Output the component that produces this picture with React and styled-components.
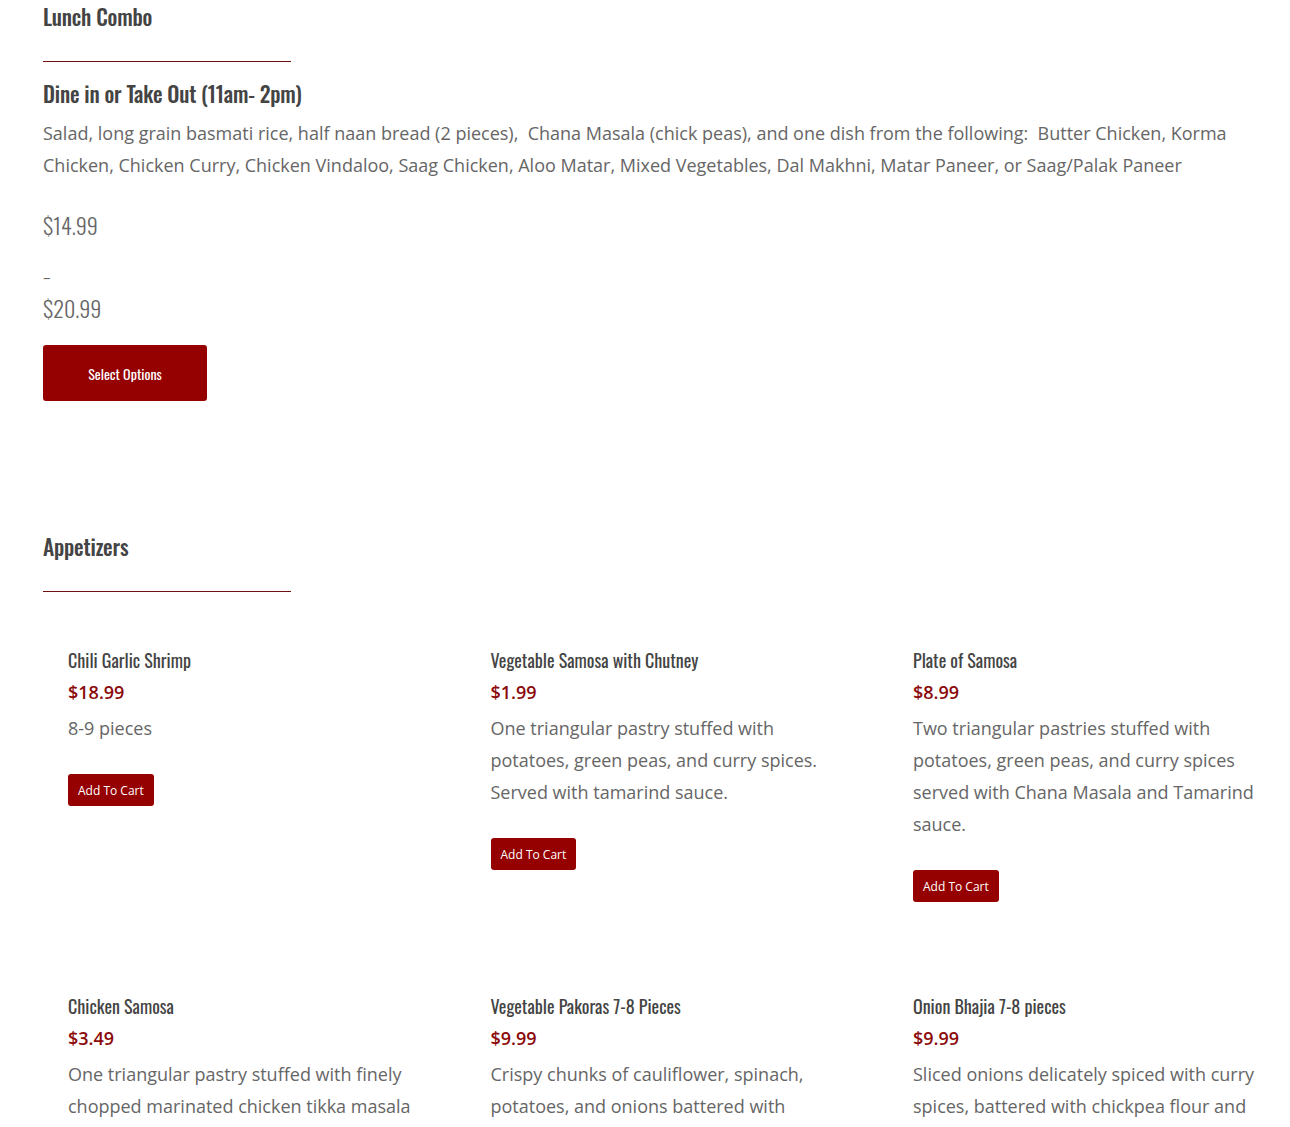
import React from 'react';
import styled, { createGlobalStyle } from 'styled-components';

const Global = createGlobalStyle`
  body {
    margin: 0;
    background: #fff;
    font-family: 'Open Sans', sans-serif;
    color: #666;
  }
`;

const HEAD = `'Oswald', 'Liberation Sans Narrow', 'DejaVu Sans Condensed', sans-serif`;

const Page = styled.div`
  padding: 0 43px;
  width: 1204px;
`;

const Section = styled.section`
  display: flex;
  flex-direction: column;
  align-items: flex-start;
  margin-top: ${p => p.$top || 0}px;
`;

const Title = styled.h2`
  margin: 0;
  font-family: ${HEAD};
  font-weight: 500;
  font-size: 21.5px;
  line-height: 32px;
  color: #444;
  letter-spacing: -0.2px;
`;

const Divider = styled.div`
  width: 248px;
  height: 1px;
  background: #6e1010;
  margin-top: 29px;
`;

const SubTitle = styled.h3`
  margin: 15px 0 0;
  font-family: ${HEAD};
  font-weight: 500;
  font-size: 21.5px;
  line-height: 32px;
  color: #444;
  letter-spacing: -0.2px;
`;

const Desc = styled.p`
  margin: 8px 0 0;
  font-size: 18px;
  line-height: 32px;
  color: #666;
`;

const RangePrice = styled.div`
  font-family: ${HEAD};
  font-weight: 300;
  font-size: 22px;
  line-height: 36px;
  color: #666;
  margin-top: ${p => p.$top || 0}px;
`;

const Dash = styled.div`
  font-family: ${HEAD};
  font-weight: 300;
  font-size: 16px;
  line-height: 16px;
  color: #666;
  margin-top: 25px;
`;

const SelectButton = styled.button`
  margin-top: 19px;
  width: 164px;
  height: 56px;
  border: 0;
  border-radius: 3px;
  background: #950000;
  color: #fff;
  font-family: ${HEAD};
  font-size: 14px;
  cursor: pointer;
`;

const Grid = styled.div`
  display: grid;
  grid-template-columns: 422.5px 422.5px 1fr;
  row-gap: 92px;
  margin-top: 56px;
`;

const Item = styled.div`
  padding-left: 25px;
  width: 360px;
  display: flex;
  flex-direction: column;
  align-items: flex-start;
`;

const ItemName = styled.h4`
  margin: 0;
  font-family: ${HEAD};
  font-weight: 400;
  font-size: 18px;
  line-height: 24px;
  color: #444;
`;

const ItemPrice = styled.div`
  margin-top: 4px;
  font-size: 18px;
  line-height: 32px;
  font-weight: 600;
  color: #8b0a0a;
`;

const ItemDesc = styled.p`
  margin: 4px 0 0;
  font-size: 18px;
  line-height: 32px;
  color: #666;
`;

const CartButton = styled.button`
  margin-top: 30px;
  height: 32px;
  padding: 0 10px;
  border: 0;
  border-radius: 3px;
  background: #950000;
  color: #fff;
  font-family: 'Open Sans', sans-serif;
  font-size: 12px;
  cursor: pointer;
`;

const items = [
  { name: 'Chili Garlic Shrimp', price: '$18.99', desc: '8-9 pieces' },
  { name: 'Vegetable Samosa with Chutney', price: '$1.99', desc: 'One triangular pastry stuffed with potatoes, green peas, and curry spices. Served with tamarind sauce.' },
  { name: 'Plate of Samosa', price: '$8.99', desc: 'Two triangular pastries stuffed with potatoes, green peas, and curry spices served with Chana Masala and Tamarind sauce.' },
  { name: 'Chicken Samosa', price: '$3.49', desc: 'One triangular pastry stuffed with finely chopped marinated chicken tikka masala' },
  { name: 'Vegetable Pakoras 7-8 Pieces', price: '$9.99', desc: 'Crispy chunks of cauliflower, spinach, potatoes, and onions battered with' },
  { name: 'Onion Bhajia 7-8 pieces', price: '$9.99', desc: 'Sliced onions delicately spiced with curry spices, battered with chickpea flour and' },
];

export default function App() {
  return (
    <Page>
      <Global />
      <Section>
        <Title>Lunch Combo</Title>
        <Divider />
        <SubTitle>Dine in or Take Out (11am- 2pm)</SubTitle>
        <Desc>
          Salad, long grain basmati rice, half naan bread (2 pieces),&nbsp; Chana Masala (chick peas), and one dish from the following:&nbsp; Butter Chicken, Korma Chicken, Chicken Curry, Chicken Vindaloo, Saag Chicken, Aloo Matar, Mixed Vegetables, Dal Makhni, Matar Paneer, or Saag/Palak Paneer
        </Desc>
        <RangePrice $top={26}>$14.99</RangePrice>
        <Dash>–</Dash>
        <RangePrice $top={6}>$20.99</RangePrice>
        <SelectButton>Select Options</SelectButton>
      </Section>

      <Section $top={129}>
        <Title>Appetizers</Title>
        <Divider />
      </Section>

      <Grid>
        {items.map(it => (
          <Item key={it.name}>
            <ItemName>{it.name}</ItemName>
            <ItemPrice>{it.price}</ItemPrice>
            <ItemDesc>{it.desc}</ItemDesc>
            <CartButton>Add To Cart</CartButton>
          </Item>
        ))}
      </Grid>
    </Page>
  );
}
